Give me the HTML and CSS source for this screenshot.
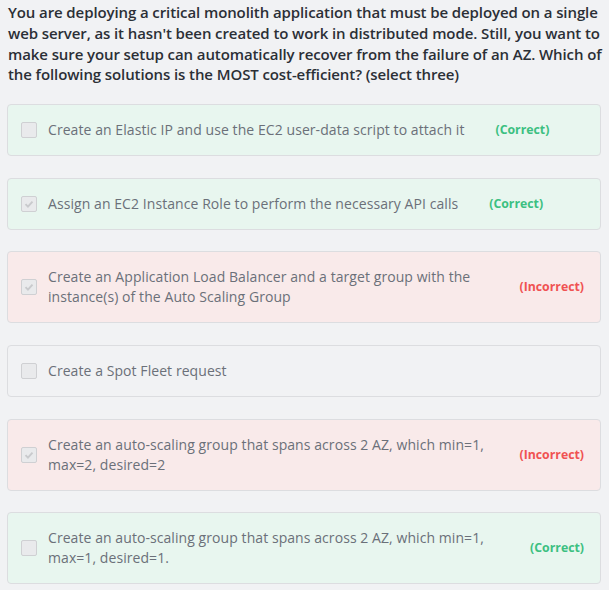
FILE: index.html
```html
<!DOCTYPE html>
<html>
<head>
<meta charset="utf-8">
<link rel="stylesheet" href="styles.css">
</head>
<body>
<div class="quiz">
  <p class="question">You are deploying a critical monolith application that must be deployed on a single web server, as it hasn't been created to work in distributed mode. Still, you want to make sure your setup can automatically recover from the failure of an AZ. Which of the following solutions is the MOST cost-efficient? (select three)</p>
  <ul class="options">
    <li class="option correct">
      <span class="box"></span>
      <span class="text">Create an Elastic IP and use the EC2 user-data script to attach it</span>
      <span class="verdict good">(Correct)</span>
    </li>
    <li class="option correct">
      <span class="box checked"><svg viewBox="0 0 16 16" width="16" height="16"><path d="M4 8.2 L6.8 11 L12 5.2" fill="none" stroke="#c9cacd" stroke-width="2.2"/></svg></span>
      <span class="text">Assign an EC2 Instance Role to perform the necessary API calls</span>
      <span class="verdict good">(Correct)</span>
    </li>
    <li class="option wrong">
      <span class="box checked"><svg viewBox="0 0 16 16" width="16" height="16"><path d="M4 8.2 L6.8 11 L12 5.2" fill="none" stroke="#c9cacd" stroke-width="2.2"/></svg></span>
      <span class="text">Create an Application Load Balancer and a target group with the instance(s) of the Auto Scaling Group</span>
      <span class="verdict bad">(Incorrect)</span>
    </li>
    <li class="option">
      <span class="box"></span>
      <span class="text">Create a Spot Fleet request</span>
    </li>
    <li class="option wrong">
      <span class="box checked"><svg viewBox="0 0 16 16" width="16" height="16"><path d="M4 8.2 L6.8 11 L12 5.2" fill="none" stroke="#c9cacd" stroke-width="2.2"/></svg></span>
      <span class="text">Create an auto-scaling group that spans across 2 AZ, which min=1, max=2, desired=2</span>
      <span class="verdict bad">(Incorrect)</span>
    </li>
    <li class="option correct">
      <span class="box"></span>
      <span class="text">Create an auto-scaling group that spans across 2 AZ, which min=1, max=1, desired=1.</span>
      <span class="verdict good">(Correct)</span>
    </li>
  </ul>
</div>
</body>
</html>
```

FILE: styles.css
```css
html, body {
  margin: 0;
  padding: 0;
  background: #f1f2f4;
}
body {
  font-family: "Open Sans", "Noto Sans", sans-serif;
}
.quiz {
  padding: 2px 8px 0 7px;
}
.question {
  margin: 0 -7px 0 1px;
  font-size: 15px;
  font-weight: 600;
  line-height: 20.8px;
  color: #2b2f36;
  letter-spacing: -0.1px;
}
.options {
  list-style: none;
  margin: 19px 0 0 0;
  padding: 0;
  display: flex;
  flex-direction: column;
  gap: 21.6px;
}
.option {
  display: flex;
  align-items: center;
  padding: 15px 16px 15px 13px;
  border: 1px solid #dcdde0;
  border-radius: 4px;
  background: #f1f2f4;
  font-size: 14px;
  line-height: 20px;
  color: #6b7079;
  letter-spacing: 0.07px;
}
.option.correct {
  background: #e8f6ef;
}
.option.wrong {
  background: #f9eaea;
}
.box {
  flex: none;
  width: 14px;
  height: 14px;
  border: 1px solid #cfd0d3;
  border-radius: 2px;
  background: #e9eaec;
  margin-right: 11px;
  display: flex;
  align-items: center;
  justify-content: center;
}
.box svg {
  width: 14px;
  height: 14px;
}
.text {
  flex: 0 1 auto;
}
.verdict {
  flex: none;
  margin-left: 31px;
  font-size: 12.3px;
  font-weight: 700;
  letter-spacing: 0;
}
.verdict.good {
  color: #3cc081;
}
.verdict.bad {
  color: #f05252;
}
```
